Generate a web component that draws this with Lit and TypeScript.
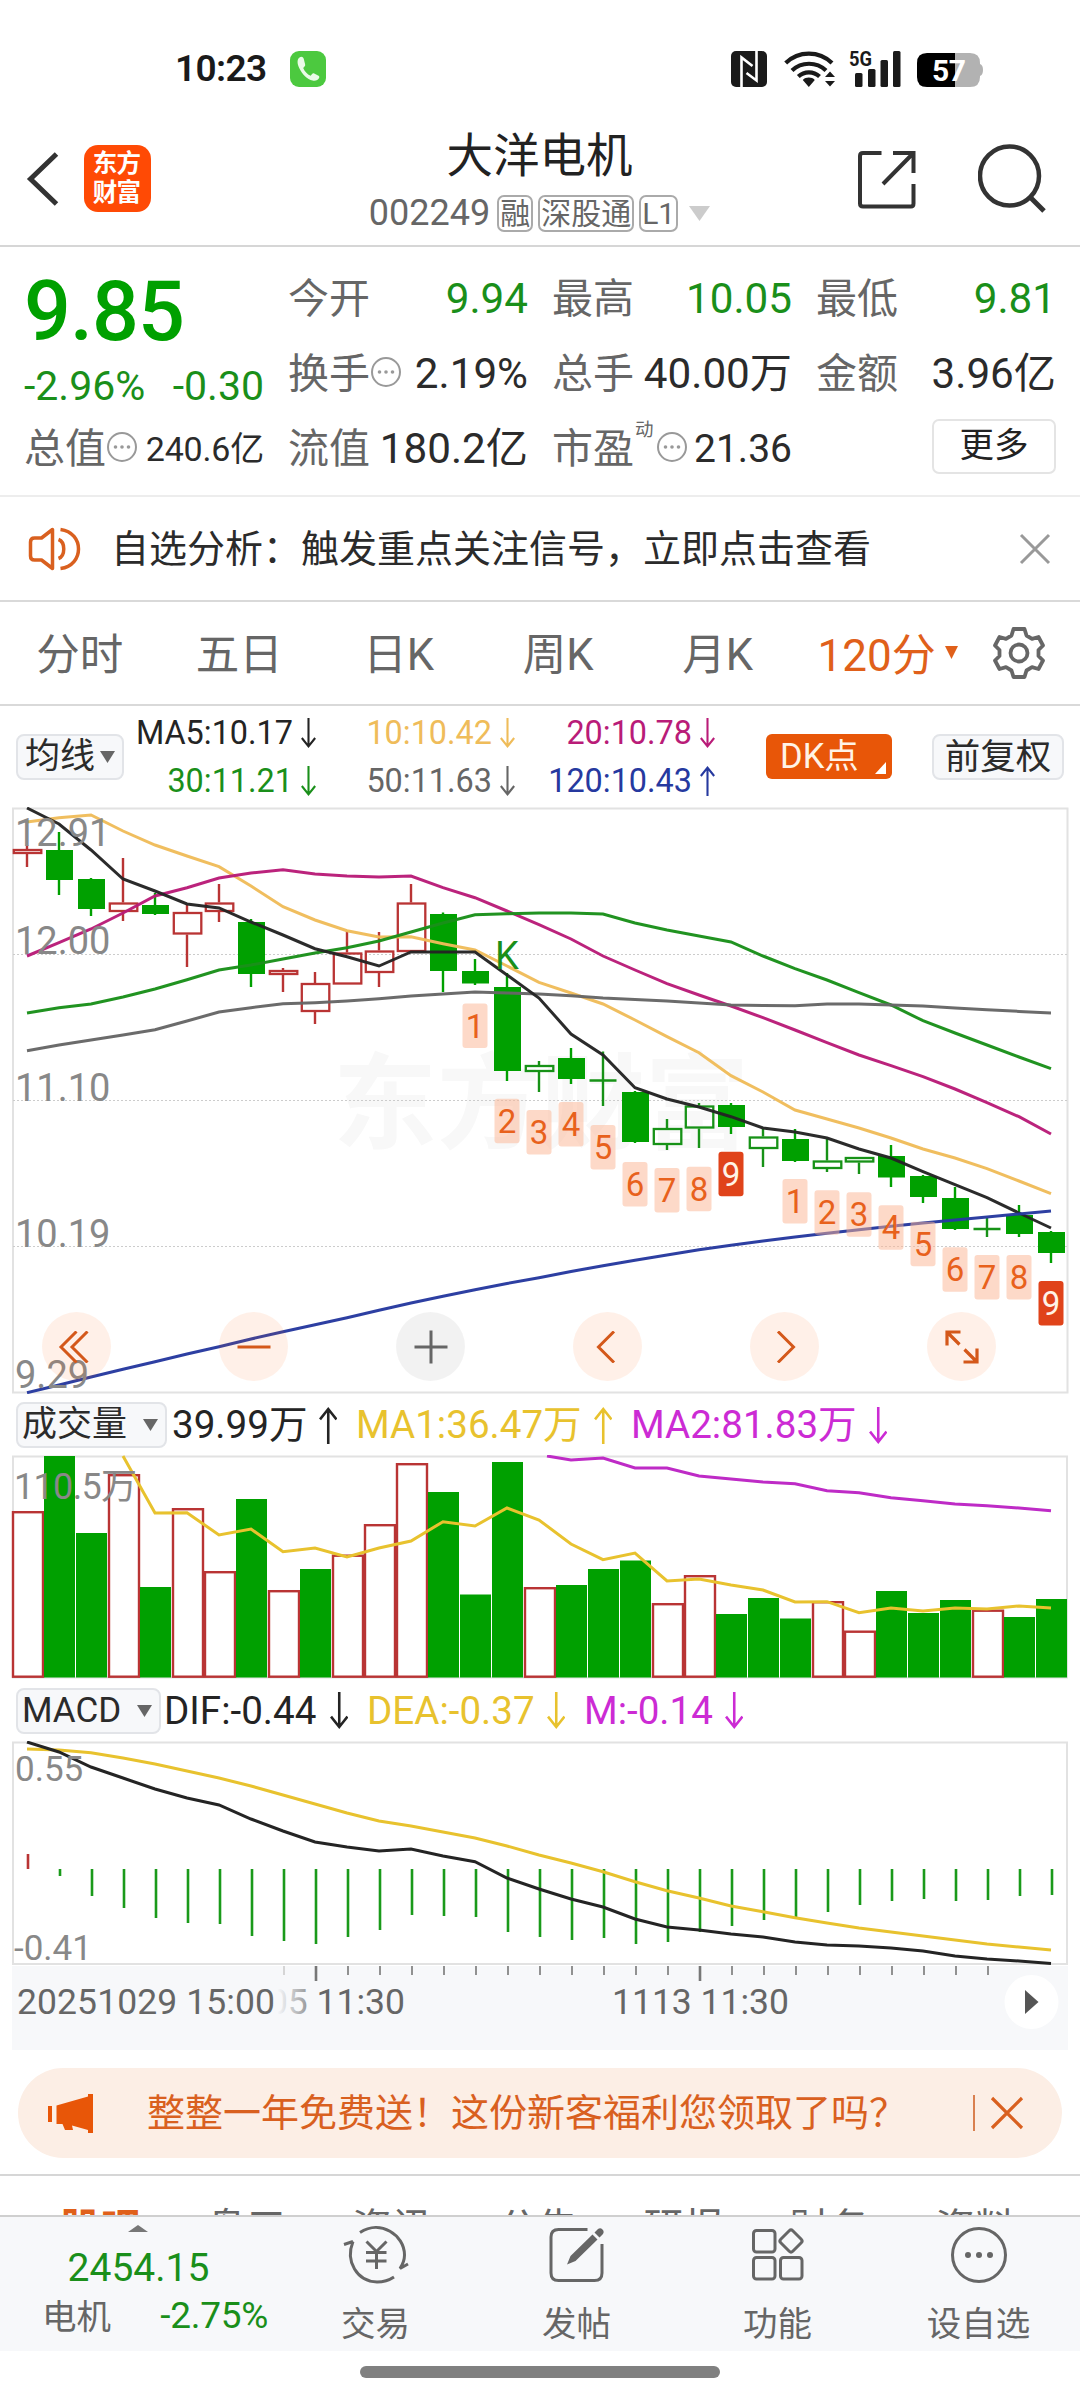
import { LitElement, html, svg, css } from "lit";
import { customElement, property } from "lit/decorators.js";
import { classMap } from "lit/directives/class-map.js";

const PITCH = 32;
const FIRST = 27;
const cx = (i: number) => FIRST + i * PITCH;
const points = (ys: number[], start = 0) => ys.map((y, i) => `${cx(start + i)},${y}`).join(" ");

type Kind = "r" | "g" | "h" | "c";
type Candle = [Kind, number, number, number, number];

// kind, body top, body bottom, wick top, wick bottom
const CANDLES: Candle[] = [
  ["r", 849, 854, 845, 867], ["g", 850, 880, 832, 895], ["g", 879, 909, 878, 916],
  ["r", 902.5, 912, 858, 921], ["g", 905, 914, 893, 915], ["r", 912, 934.5, 905, 967],
  ["r", 902.5, 912, 884, 922], ["g", 922, 974, 919, 987], ["r", 970, 975, 968, 992],
  ["r", 983, 1012, 972, 1024], ["r", 952.5, 984.5, 931, 984], ["r", 950.5, 973, 932, 987],
  ["r", 902.5, 952, 884, 951], ["g", 914, 971, 912.5, 992], ["g", 971, 983.5, 959, 985],
  ["g", 987, 1071, 973, 1081], ["h", 1065, 1072, 1061, 1092], ["g", 1058, 1079, 1048, 1084],
  ["c", 1080.5, 1080.5, 1051.5, 1106], ["g", 1092, 1142, 1091, 1143], ["h", 1128, 1145, 1119, 1150],
  ["h", 1105.5, 1128.5, 1103, 1148], ["g", 1105, 1127, 1103, 1134], ["h", 1136.5, 1149, 1129, 1167],
  ["g", 1139, 1161, 1129, 1162], ["h", 1160.5, 1169, 1139, 1172], ["h", 1157, 1162.5, 1157, 1174],
  ["g", 1156, 1177.5, 1145, 1187], ["g", 1176, 1197, 1175, 1203], ["g", 1198, 1229, 1187, 1230],
  ["c", 1229, 1229, 1218, 1237], ["g", 1215, 1234, 1205, 1237], ["g", 1232, 1253, 1231, 1263],
];

const MA_LINES: { color: string; ys: number[] }[] = [
  { color: "#EFBC5A", ys: [822, 817.7, 815, 831, 845, 856, 866.7, 886, 906.7, 920, 930.7, 937, 936.7, 943.7, 950, 966, 982.3, 993, 1004, 1020, 1036.7, 1052.7, 1075.7, 1092, 1110, 1119, 1128, 1138, 1149, 1158, 1168.7, 1181, 1193.7] },
  { color: "#B91C78", ys: [956, 942.7, 929, 913, 896, 887.7, 878, 873, 869.7, 874, 876, 877, 876, 887.7, 897.7, 911, 924.7, 939, 956, 970, 983.7, 995, 1006, 1017.7, 1030, 1042.7, 1055, 1065.7, 1076.7, 1089, 1102.7, 1116.7, 1134] },
  { color: "#1A8F1A", ys: [1013, 1007.7, 1004, 997, 989, 979.7, 970, 965, 959, 953, 947.7, 941, 932, 923, 914.7, 913.7, 913, 913, 914, 923, 930, 936, 942, 956, 968.7, 980, 992.7, 1005, 1020.7, 1033, 1045, 1057, 1068.7] },
  { color: "#666666", ys: [1050.7, 1045, 1040, 1035, 1029.7, 1021, 1012, 1007.7, 1003.7, 1002.7, 1001, 998.7, 996, 994, 992, 993, 994, 995.7, 998, 999.5, 1001, 1003, 1005, 1005.5, 1005.7, 1004, 1004, 1005, 1006, 1008, 1009.7, 1011.4, 1013] },
  { color: "#242424", ys: [808, 824, 850, 879, 891, 904, 908, 922, 935, 948.7, 956.7, 966, 952, 952, 952, 975, 998, 1034, 1055, 1087.7, 1099, 1107, 1116.7, 1128, 1132, 1138, 1149, 1158, 1171.7, 1184.7, 1197.7, 1213, 1228] },
  { color: "#26399F", ys: [1392.7, 1385, 1377, 1369.3, 1361.7, 1354, 1346.7, 1339, 1331.7, 1324.7, 1317.7, 1310.3, 1303, 1296.3, 1289.7, 1283.5, 1277.7, 1271.5, 1265.7, 1260.2, 1255, 1249.7, 1245.3, 1241, 1237, 1233.3, 1229.7, 1226.3, 1223, 1220, 1217, 1214, 1211] },
];

const BADGES: [number, string, number][] = [
  [14, "1", 1003.5], [15, "2", 1098.7], [16, "3", 1110], [17, "4", 1102], [18, "5", 1125],
  [19, "6", 1162], [20, "7", 1168], [21, "8", 1166.7], [22, "9", 1151.7], [24, "1", 1179],
  [25, "2", 1190.3], [26, "3", 1192.3], [27, "4", 1205.3], [28, "5", 1221.7], [29, "6", 1247.3],
  [30, "7", 1255], [31, "8", 1255], [32, "9", 1281],
];

const PRICE_LABELS: [string, number][] = [["12.91", 845.5], ["12.00", 953.5], ["11.10", 1100.5], ["10.19", 1246.5], ["9.29", 1388]];

const VOLUMES: ["r" | "g", number][] = [
  ["r", 1511], ["g", 1456], ["g", 1533], ["r", 1474], ["g", 1587], ["r", 1508], ["r", 1571], ["g", 1499],
  ["r", 1590], ["g", 1569], ["r", 1554.5], ["r", 1524], ["r", 1463], ["g", 1492], ["g", 1594.5], ["g", 1462],
  ["r", 1587], ["g", 1585], ["g", 1569], ["g", 1560.5], ["r", 1603], ["r", 1575], ["g", 1614], ["g", 1598],
  ["g", 1618.5], ["r", 1601], ["r", 1630.5], ["g", 1591], ["g", 1613], ["g", 1600], ["r", 1609.5], ["g", 1617], ["g", 1599],
];
const VOL_MA1 = [1456, 1513, 1512.7, 1535, 1529, 1551.7, 1548, 1557, 1548, 1541, 1521.7, 1526, 1508, 1520, 1544, 1559.7, 1553, 1581, 1579, 1585, 1590, 1602, 1601.7, 1612.7, 1608, 1611, 1608, 1609, 1606, 1608];
const VOL_MA2 = [1460, 1458, 1468, 1468, 1476, 1479, 1482, 1483.7, 1490.7, 1492.7, 1497.7, 1500.7, 1504, 1505.7, 1508, 1510.7];

const DIF = [1742, 1752, 1767, 1778, 1789, 1798, 1805, 1819, 1831, 1842, 1847, 1851, 1849, 1856, 1861.7, 1878, 1889, 1899, 1907, 1919, 1927, 1930, 1934, 1937, 1942, 1945, 1946, 1948, 1951, 1956, 1959, 1961, 1963.5];
const DEA = [1749, 1750, 1752.7, 1758, 1764, 1771, 1778, 1786, 1795, 1804, 1813, 1821, 1826, 1832, 1838, 1846, 1855, 1863, 1871.7, 1881.7, 1890.7, 1898, 1906, 1911.7, 1917.7, 1923, 1928, 1932, 1936, 1940, 1944, 1947, 1950];
const HIST = [1854, 1876, 1896, 1908, 1918, 1923, 1924, 1936, 1941, 1944, 1937, 1930, 1915, 1916, 1917, 1932, 1937, 1940, 1938, 1944, 1942, 1932, 1926, 1920, 1917, 1912, 1905, 1901, 1899, 1901, 1900, 1896, 1895];

const font = css`
  :host {
    font-family: Roboto, "Noto Sans CJK SC", sans-serif;
    box-sizing: border-box;
  }
  *, *::before, *::after { box-sizing: border-box; }
  svg { display: block; flex: none; }
`;

@customElement("status-bar")
export class StatusBar extends LitElement {
  static styles = [font, css`
    :host { display: flex; height: 100px; padding: 42px 96px 0 175px; align-items: flex-start; }
    .time { font-weight: 600; font-size: 37px; line-height: 54px; letter-spacing: -0.6px; color: #1a1a1a; width: 115px; }
    .phone { margin-top: 9px; }
    .icons { margin-left: auto; margin-top: 8px; overflow: visible; }
    .net { font: 700 21px Roboto, sans-serif; fill: #1a1a1a; }
    .battery { font: 700 30px Roboto, sans-serif; fill: #fff; }
  `];
  render() {
    return html`
      <span class="time">10:23</span>
      <svg class="phone" width="36" height="36" viewBox="0 0 36 36">
        <rect width="36" height="36" rx="9" fill="#4CC93F" />
        <path d="M9.500 6.500c-2.600 2-2.400 6-.3 10.400 3 6.300 8 11.200 13.400 12.600 2.600.6 5.600-.2 6.600-2.800.3-.8 0-1.600-.7-2l-4.300-2.300c-.8-.4-1.600-.2-2.100.5l-1.500 1.800c-3.500-1.600-6-4.300-7.400-7.800l1.500-1.600c.5-.6.6-1.300.4-2.100L13.800 8c-.6-2-2.500-2.900-4.300-1.500z" fill="#EAFBE7" />
      </svg>
      <svg class="icons" width="254" height="40" viewBox="730 50 254 40">
        <rect x="731" y="51" width="36" height="36" rx="5" fill="#1a1a1a" />
        <path d="M741.500 87V57.500l11 8.500M756.500 51v29.500l-10-7.500" fill="none" stroke="#fff" stroke-width="2.600" />
        <g fill="none" stroke="#1a1a1a" stroke-width="4.200">
          <path d="M785.700 63c13-12.500 33.300-12.500 46.300 0" />
          <path d="M792 70.500c9.500-9 24.500-9 34 0" />
          <path d="M798.300 76.500c6-5.500 15.200-5.500 21.200 0" />
        </g>
        <path d="M808.800 87l-6-7c3-3.200 9-3.200 12 0zM830 71.500l5 5.500h-10zM830 86.500l5-5.500h-10z" fill="#1a1a1a" />
        <text class="net" x="849" y="65.500" textLength="23" lengthAdjust="spacingAndGlyphs">5G</text>
        <g fill="#1a1a1a">
          <rect x="855" y="73" width="7.500" height="14" rx="1.500" />
          <rect x="868" y="69" width="7.500" height="18" rx="1.500" />
          <rect x="880.500" y="60" width="7.500" height="27" rx="1.500" />
          <rect x="893" y="51" width="7.500" height="36" rx="1.500" />
        </g>
        <path d="M955 53h15q10 0 10 10v1q3 1 3 6t-3 6v1q0 10-10 10h-15z" fill="#B2B2B2" />
        <path d="M955 53h-28q-10 0-10 10v14q0 10 10 10h28z" fill="#000" />
        <text class="battery" x="932" y="81" textLength="34">57</text>
      </svg>
    `;
  }
}

@customElement("title-bar")
export class TitleBar extends LitElement {
  static styles = [font, css`
    :host { display: grid; grid-template-columns: 222px 1fr 223px; height: 147px; border-bottom: 2px solid #d6d6d6; }
    .left { display: flex; gap: 25px; padding: 45px 0 0 26px; }
    .back { margin-top: 7px; }
    .logo { width: 67px; height: 67px; border-radius: 14px; background: #FF4A05; color: #fff; font-size: 24.500px; font-weight: 700; line-height: 28.500px; text-align: center; padding: 5px 2px 0 0; letter-spacing: -0.8px; }
    .mid { display: flex; flex-direction: column; align-items: center; }
    .name { font-size: 46.500px; line-height: 60px; margin-top: 26px; color: #222; }
    .sub { display: flex; align-items: center; height: 37px; margin-top: 9px; font-size: 35.500px; line-height: 37px; color: #666; }
    .tag { border: 2px solid #aaa; border-radius: 7px; height: 37px; line-height: 33px; margin-left: 5px; font-size: 30px; padding: 0 1px; }
    .code { font-size: 36px; }
    .code + .tag { margin-left: 7px; }
    .down { margin-left: 11px; }
    .right { display: flex; gap: 61px; padding-top: 44px; }
    .share { margin-top: 6px; }
  `];
  render() {
    return html`
      <div class="left">
        <svg class="back" width="33" height="54" viewBox="0 0 33 54"><path d="M30.500 2L4.500 27l26 25" fill="none" stroke="#333" stroke-width="5" /></svg>
        <div class="logo">东方<br />财富</div>
      </div>
      <div class="mid">
        <div class="name">大洋电机</div>
        <div class="sub">
          <span class="code">002249</span><span class="tag">融</span><span class="tag">深股通</span><span class="tag">L1</span>
          <svg class="down" width="21" height="15" viewBox="0 0 21 15"><path d="M0 0h21L10.500 15z" fill="#ccc" /></svg>
        </div>
      </div>
      <div class="right">
        <svg class="share" width="60" height="60" viewBox="857 150 60 60">
          <path d="M881.500 153H863q-3 0-3 3v47.500q0 3 3 3h48q2.500 0 2.500-3V184M893 153h20.500v20M912 154.500L883 184" fill="none" stroke="#333" stroke-width="4" />
        </svg>
        <svg width="68" height="70" viewBox="978 144 68 70">
          <circle cx="1009.500" cy="176" r="29.500" fill="none" stroke="#333" stroke-width="4.500" />
          <path d="M1030 197l14 14" stroke="#333" stroke-width="5" />
        </svg>
      </div>
    `;
  }
}

const info = html`<svg width="32" height="32" viewBox="0 0 32 32"><circle cx="16" cy="16" r="14" fill="none" stroke="#999" stroke-width="2" /><g fill="#999"><circle cx="9.500" cy="16" r="1.800" /><circle cx="16" cy="16" r="1.800" /><circle cx="22.500" cy="16" r="1.800" /></g></svg>`;

@customElement("quote-panel")
export class QuotePanel extends LitElement {
  static styles = [font, css`
    :host { display: grid; grid-template-columns: repeat(4, 240px); column-gap: 24px; grid-template-rows: repeat(3, 75px); padding: 14.500px 24px 0; height: 250px; border-bottom: 2px solid #ededed; }
    .main { grid-row: 1 / 3; display: flex; flex-direction: column; }
    .price { font-size: 82.500px; font-weight: 500; line-height: 96px; color: #00A000; margin-top: 2px; letter-spacing: -0.900px; }
    .chg { display: flex; justify-content: space-between; font-size: 41px; line-height: 50px; color: #1A8F1A; margin-top: 1px; }
    .cell { display: flex; align-items: center; justify-content: space-between; line-height: 50px; white-space: nowrap; }
    .k { display: flex; align-items: center; font-size: 41px; color: #666; }
    .k svg { margin: -5px 0 0 0; }
    .sup { font-size: 18.500px; line-height: 20px; margin: -38px 2px 0 1px; }
    .v { font-size: 42.200px; color: #2b2b2b; }
    .v.small { font-size: 34px; letter-spacing: -0.200px; }
    .v.mid { font-size: 39px; }
    .v.down { color: #1A8F1A; }
    .more { width: 124px; height: 55px; margin-left: auto; align-self: center; border: 2px solid #e4e4e4; border-radius: 7px; font-size: 34.500px; line-height: 48px; text-align: center; color: #222; margin-bottom: 5px; }
  `];
  cell(k: unknown, v: string, cls = "") {
    return html`<div class="cell"><span class="k">${k}</span><span class="v ${cls}">${v}</span></div>`;
  }
  render() {
    return html`
      <div class="main">
        <div class="price">9.85</div>
        <div class="chg"><span>-2.96%</span><span>-0.30</span></div>
      </div>
      ${this.cell("今开", "9.94", "down")} ${this.cell("最高", "10.05", "down")} ${this.cell("最低", "9.81", "down")}
      ${this.cell(html`换手${info}`, "2.19%")} ${this.cell("总手", "40.00万")} ${this.cell("金额", "3.96亿")}
      ${this.cell(html`总值${info}`, "240.6亿", "small")} ${this.cell("流值", "180.2亿")}
      ${this.cell(html`市盈<span class="sup">动</span>${info}`, "21.36", "mid")}
      <div class="more">更多</div>
    `;
  }
}

@customElement("notice-row")
export class NoticeRow extends LitElement {
  static styles = [font, css`
    :host { display: flex; align-items: center; height: 105px; border-bottom: 2px solid #d9d9d9; padding: 0 29px 0 28px; }
    .text { font-size: 38px; color: #2b2b2b; margin-left: 29px; line-height: 50px; }
    .x { margin-left: auto; }
  `];
  render() {
    return html`
      <svg width="54" height="46" viewBox="28 526 54 46" fill="none" stroke="#D9601F" stroke-width="3.500">
        <path d="M52.500 529.500v39l-11-8.500h-7q-4 0-4-4v-14q0-4 4-4h7z" stroke-linejoin="round" />
        <path d="M58.500 539.500c7 2.500 7 16.500 0 19M60.500 529.500c24 3 24 36 0 39" />
      </svg>
      <span class="text">自选分析：触发重点关注信号，立即点击查看</span>
      <svg class="x" width="32" height="32" viewBox="0 0 32 32"><path d="M2 2l28 28M30 2L2 30" stroke="#999" stroke-width="3" /></svg>
    `;
  }
}

@customElement("period-tabs")
export class PeriodTabs extends LitElement {
  static styles = [font, css`
    :host { display: flex; align-items: center; height: 104px; border-bottom: 2px solid #d9d9d9; }
    .tab { flex: 0 0 159.500px; text-align: center; font-size: 43.500px; line-height: 60px; color: #666; padding-top: 5px; }
    .on { color: #E0601A; font-size: 44px; line-height: 60px; margin-left: 20px; padding-top: 5px; }
    .tri { margin: -2px 35px 0 9px; }
  `];
  render() {
    return html`
      ${["分时", "五日", "日K", "周K", "月K"].map((t) => html`<span class="tab">${t}</span>`)}
      <span class="on">120分</span>
      <svg class="tri" width="13" height="13" viewBox="0 0 13 13"><path d="M0 0h13L6.500 13z" fill="#E0601A" /></svg>
      <svg width="52" height="52" viewBox="-26 -26 52 52" fill="none" stroke="#666" stroke-width="3.800">
        <circle r="8.500" />
        <path d="M-5.500 -24H5.500L7.500 -17.500L13 -14.200L19.500 -16L24 -7.500L19.500 -3V3L24 7.500L19.500 16L13 14.200L7.500 17.500L5.500 24H-5.500L-7.500 17.500L-13 14.200L-19.500 16L-24 7.500L-19.500 3V-3L-24 -7.500L-19.500 -16L-13 -14.200L-7.500 -17.500Z" stroke-linejoin="round" />
      </svg>
    `;
  }
}

@customElement("trend-arrow")
export class TrendArrow extends LitElement {
  @property({ type: Boolean }) up = false;
  @property({ type: Number }) size = 28;
  static styles = css`:host { display: block; flex: none; } svg { display: block; }`;
  render() {
    const d = this.up ? "M9 36V2M1 12L9 2l8 10" : "M9 0v34M1 24l8 10 8-10";
    return html`<svg width=${this.size / 2} height=${this.size} viewBox="0 0 18 36"><path d=${d} fill="none" stroke="currentColor" stroke-width="2.500" /></svg>`;
  }
}

@customElement("pick-box")
export class PickBox extends LitElement {
  static styles = [font, css`
    :host { display: flex; align-items: center; justify-content: space-between; height: 46px; background: #F7F8FA; border: 2px solid #e2e4e8; border-radius: 8px; color: #2b2b2b; line-height: 42px; font-size: 35px; white-space: nowrap; }
  `];
  render() {
    return html`<slot></slot><svg width="15" height="12" viewBox="0 0 15 12"><path d="M0 0h15L7.500 12z" fill="#666" /></svg>`;
  }
}

@customElement("average-bar")
export class AverageBar extends LitElement {
  static styles = [font, css`
    :host { display: flex; height: 101px; padding-left: 16px; align-items: center; }
    .pick { width: 108px; padding: 0 7px 0 7px; font-size: 35px; }
    .grid { display: grid; grid-template-columns: 192px 199px 200px; grid-auto-rows: 48px; padding-top: 1px; }
    .item { display: flex; align-items: center; justify-content: flex-end; gap: 8px; font-size: 32.400px; line-height: 48px; }
    .dk { display: flex; align-items: flex-end; justify-content: space-between; width: 126px; height: 45px; margin-left: 51px; padding: 0 6px 5px 14px; background: #E85608; border-radius: 6px; color: #fff3e6; font-size: 34.500px; line-height: 36px; }
    .adj { width: 132px; height: 46px; margin-left: 40px; background: #F7F8FA; border: 2px solid #e2e4e8; border-radius: 8px; font-size: 35.500px; line-height: 42px; text-align: center; color: #2b2b2b; }
  `];
  render() {
    const rows: [string, string, boolean][] = [
      ["MA5:10.17", "#242424", false], ["10:10.42", "#EFBC5A", false], ["20:10.78", "#B91C78", false],
      ["30:11.21", "#1A8F1A", false], ["50:11.63", "#666", false], ["120:10.43", "#26399F", true],
    ];
    return html`
      <pick-box class="pick">均线</pick-box>
      <div class="grid">
        ${rows.map(([t, c, up]) => html`<span class="item" style="color:${c}">${t}<trend-arrow .up=${up} .size=${30}></trend-arrow></span>`)}
      </div>
      <div class="dk"><span>DK点</span><svg width="11" height="12" viewBox="0 0 11 12"><path d="M11 0v12H0z" fill="#fff" /></svg></div>
      <div class="adj">前复权</div>
    `;
  }
}

@customElement("candle-chart")
export class CandleChart extends LitElement {
  static styles = [font, css`
    :host { display: block; position: relative; height: 587px; }
    .axis { font: 38px Roboto, sans-serif; fill: #888; }
    .mark { font: 33px Roboto, sans-serif; fill: #E8611C; text-anchor: middle; }
    .mark.hot { fill: #fff3e6; }
    .k { font: 38px Roboto, sans-serif; fill: #1A8F1A; }
    .brand { font: 700 104px "Noto Sans CJK SC", sans-serif; fill: #f8f8f8; }
    .controls { position: absolute; left: 42px; top: 505px; display: flex; gap: 108px; }
    .btn { width: 69px; height: 69px; border-radius: 50%; background: rgba(255, 106, 30, 0.1); color: #D4581A; display: flex; align-items: center; justify-content: center; }
    .btn.off { background: rgba(0, 0, 0, 0.05); color: #666; }
  `];
  candle([kind, top, bottom, high, low]: Candle, i: number) {
    const x = cx(i);
    if (kind === "g") {
      return svg`<g fill="#00A000"><rect x=${x - 1.2} y=${high} width="2.400" height=${low - high} /><rect x=${x - 13} y=${top} width="27" height=${bottom - top} /></g>`;
    }
    const color = kind === "r" ? "#B93434" : "#179217";
    if (kind === "c") {
      return svg`<path d="M${x} ${high}V${low}M${x - 13.5} ${top}H${x + 13.5}" stroke=${color} stroke-width="2.400" />`;
    }
    return svg`<path d="M${x} ${high}V${top}M${x} ${bottom}V${Math.max(low, bottom)}" stroke=${color} stroke-width="2.400" />
      <rect x=${x - 13.2} y=${top + 1} width="27.500" height=${bottom - top - 2} fill="none" stroke=${color} stroke-width="2.300" />`;
  }
  render() {
    return html`
      <svg width="1080" height="587" viewBox="0 807 1080 587">
        <text class="brand" x="333" y="1141" textLength="416">东方财富</text>
        <path d="M13 808.500H1067.500V1392.500H13z" fill="none" stroke="#e2e2e2" stroke-width="2" />
        ${[954.5, 1100.5, 1246.5].map((y) => svg`<path d="M13 ${y}H1067" stroke="#ccc" stroke-width="1" stroke-dasharray="2 2" />`)}
        ${CANDLES.map((c, i) => this.candle(c, i))}
        ${MA_LINES.map((l) => svg`<polyline points=${points(l.ys)} fill="none" stroke=${l.color} stroke-width="3" stroke-opacity="0.970" />`)}
        <text class="k" x="495" y="969">K</text>
        ${BADGES.map(([i, n, y]) => {
          const hot = n === "9";
          return svg`<rect x=${cx(i) - 12.5} y=${y} width="25" height="44.500" rx="3" fill=${hot ? "#E0431A" : "rgba(252,180,146,0.5)"} />
            <text class=${hot ? "mark hot" : "mark"} x=${cx(i)} y=${y + 34}>${n}</text>`;
        })}
        ${PRICE_LABELS.map(([t, y]) => svg`<text class="axis" x="15" y=${y}>${t}</text>`)}
      </svg>
      <div class="controls">
        <div class="btn"><svg width="38" height="32" viewBox="0 0 38 32" fill="none" stroke="currentColor" stroke-width="3"><path d="M18.500 .500L3 16l15.500 15.500M29.500 .500L14 16l15.500 15.500" /></svg></div>
        <div class="btn"><svg width="34" height="32" viewBox="0 0 34 32" fill="none" stroke="currentColor" stroke-width="3"><path d="M.500 16h33" /></svg></div>
        <div class="btn off"><svg width="34" height="34" viewBox="0 0 34 34" fill="none" stroke="currentColor" stroke-width="3"><path d="M.500 17h33M17 .500v33" /></svg></div>
        <div class="btn"><svg width="34" height="32" viewBox="0 0 34 32" fill="none" stroke="currentColor" stroke-width="3"><path d="M23 .500L7.500 16 23 31.500" /></svg></div>
        <div class="btn"><svg width="32" height="32" viewBox="0 0 32 32" fill="none" stroke="currentColor" stroke-width="3"><path d="M9 .500L24.500 16 9 31.500" /></svg></div>
        <div class="btn"><svg width="34" height="34" viewBox="0 0 34 34" fill="none" stroke="currentColor" stroke-width="3.200"><path d="M2 15.500V2h13.500M2 2l12.500 12.500M32 18.500V32H18.500M32 32L19.500 19.500" /></svg></div>
      </div>
    `;
  }
}

@customElement("indicator-head")
export class IndicatorHead extends LitElement {
  @property() name = "";
  @property({ type: Number }) boxWidth = 151;
  @property({ attribute: false }) items: [string, string, boolean, number, number][] = [];
  static styles = [font, css`
    :host { display: flex; align-items: center; padding-left: 16px; }
    .item { display: flex; align-items: center; font-size: 38.600px; line-height: 46px; justify-content: space-between; white-space: nowrap; }
    pick-box { padding: 0 7px 0 4px; flex: none; }
  `];
  render() {
    return html`
      <pick-box style="width:${this.boxWidth}px">${this.name}</pick-box>
      ${this.items.map(([t, c, up, width, gap]) => html`<span class="item" style="color:${c};width:${width}px;margin-left:${gap}px">${t}<trend-arrow .up=${up} .size=${37}></trend-arrow></span>`)}
    `;
  }
}

@customElement("volume-chart")
export class VolumeChart extends LitElement {
  static styles = [font, css`
    :host { display: block; height: 224px; }
    .axis { font: 36px Roboto, "Noto Sans CJK SC", sans-serif; fill: #888; }
  `];
  render() {
    return html`
      <svg width="1080" height="224" viewBox="0 1455 1080 224">
        <path d="M13 1456.500H1067V1677.500H13z" fill="none" stroke="#e2e2e2" stroke-width="2" />
        ${VOLUMES.map(([kind, top], i) => {
          const x = cx(i);
          return kind === "g"
            ? svg`<rect x=${x - 15} y=${top} width="31" height=${1677.5 - top} fill="#00A000" />`
            : svg`<rect x=${x - 14} y=${top + 1.2} width="30" height=${1675.5 - top} fill="#fff" stroke="#B93434" stroke-width="2.400" />`;
        })}
        <polyline points=${points(VOL_MA1, 3)} fill="none" stroke="#E8C22E" stroke-width="3" />
        <polyline points=${`547,1456 ${points(VOL_MA2, 17)}`} fill="none" stroke="#BE2BC6" stroke-width="3" />
        <text class="axis" x="14" y="1499" textLength="123">110.5万</text>
      </svg>
    `;
  }
}

@customElement("macd-chart")
export class MacdChart extends LitElement {
  static styles = [font, css`
    :host { display: block; height: 309px; }
    .axis { font: 35px Roboto, sans-serif; fill: #888; }
    .time { font: 35.500px Roboto, sans-serif; fill: #666; }
    .center { text-anchor: middle; }
  `];
  render() {
    const ticks = Array.from({ length: 23 }, (_, n) => n + 8);
    return html`
      <svg width="1080" height="309" viewBox="0 1741 1080 309">
        <defs>
          <linearGradient id="fade" x1="0" x2="1"><stop offset="0" stop-color="#F7F8FA" /><stop offset="0.750" stop-color="#F7F8FA" /><stop offset="1" stop-color="#F7F8FA" stop-opacity="0.300" /></linearGradient>
        </defs>
        <rect x="12" y="1966" width="1056" height="84" fill="#F7F8FA" />
        <path d="M13 1742.500H1067V1964H13z" fill="none" stroke="#e2e2e2" stroke-width="2" />
        ${HIST.map((y, i) => i === 0
          ? svg`<path d="M28 ${y}V1869" stroke="#B93434" stroke-width="2.600" />`
          : svg`<path d="M${cx(i) + 1} 1869V${y}" stroke="#1A9A1A" stroke-width="2.600" />`)}
        <polyline points=${points(DEA)} fill="none" stroke="#E8C22E" stroke-width="3" />
        <polyline points=${points(DIF)} fill="none" stroke="#242424" stroke-width="3" />
        <text class="axis" x="15" y="1780.500">0.55</text>
        <text class="axis" x="14" y="1960">-0.41</text>
        ${ticks.map((i) => {
          const major = i === 9 || i === 21;
          return svg`<path d="M${cx(i) + 1} 1966V${major ? 1981 : 1975}" stroke=${i === 8 ? "#ccc" : "#777"} stroke-width=${major ? 2.6 : 1.6} />`;
        })}
        <text class="time center" x="316.500" y="2014">1105 11:30</text>
        <rect x="180" y="1984" width="130" height="40" fill="url(#fade)" />
        <text class="time center" x="700.500" y="2014">1113 11:30</text>
        <text class="time" x="17" y="2014" textLength="258">20251029 15:00</text>
        <circle cx="1031.500" cy="2002" r="27" fill="#fff" />
        <path d="M1025 1990l13.500 12L1025 2014z" fill="#555" />
      </svg>
    `;
  }
}

@customElement("promo-banner")
export class PromoBanner extends LitElement {
  static styles = [font, css`
    :host { display: flex; align-items: center; height: 90px; margin: 18px 18px 16px; border-radius: 45px; background: #FCEEE5; padding: 0 38px 0 29px; }
    .text { font-size: 38px; line-height: 50px; color: #D9601F; margin-left: 53px; }
    .bar { width: 2px; height: 36px; background: #D98050; margin-left: auto; margin-right: 15px; }
  `];
  render() {
    return html`
      <svg width="47" height="40" viewBox="47 2092 47 40" fill="#E85608">
        <path d="M48 2105h4v16h-4zM56.500 2104.500L88 2095.500V2093h5v39h-5v-3l-16-4.500 1 4.500h-8l-2.500-6h-6z" />
      </svg>
      <span class="text">整整一年免费送！这份新客福利您领取了吗？</span>
      <span class="bar"></span>
      <svg width="34" height="34" viewBox="0 0 34 34"><path d="M2 2l30 30M32 2L2 32" stroke="#D9601F" stroke-width="3.200" /></svg>
    `;
  }
}

@customElement("section-tabs")
export class SectionTabs extends LitElement {
  static styles = [font, css`
    :host { display: flex; height: 41px; border-top: 2px solid #d6d6d6; overflow: hidden; padding: 28px 0 0 27.500px; }
    .tab { flex: 0 0 145.800px; text-align: center; font-size: 40px; line-height: 50px; color: #666; }
    .on { color: #E0601A; font-weight: 700; }
  `];
  render() {
    return html`${["股吧", "盘口", "资讯", "公告", "研报", "财务", "资料"].map(
      (t, i) => html`<span class=${classMap({ tab: true, on: i === 0 })}>${t}</span>`,
    )}`;
  }
}

@customElement("bottom-nav")
export class BottomNav extends LitElement {
  static styles = [font, css`
    :host { display: flex; height: 136px; background: #F7F8FA; border-top: 2px solid #cfcfcf; color: #666; }
    .index { width: 275px; display: flex; flex-direction: column; align-items: center; color: #1A8F1A; }
    .up { margin-top: 8px; }
    .num { font-size: 39px; line-height: 44px; margin-top: 14px; padding-left: 2px; }
    .row { display: flex; justify-content: space-between; align-self: flex-start; width: 226px; line-height: 44px; margin: 4px 0 0 42px; }
    .label { color: #666; font-size: 34.500px; padding-top: 1px; }
    .pct { font-size: 37px; letter-spacing: -0.300px; }
    .item { flex: none; width: 201px; display: flex; flex-direction: column; align-items: center; font-size: 34.500px; line-height: 44px; }
    .item svg { margin-top: 6px; margin-bottom: 17px; fill: none; stroke: #666; stroke-width: 3; }
  `];
  render() {
    return html`
      <div class="index">
        <svg class="up" width="20" height="7" viewBox="0 0 20 7"><path d="M10 0l10 7H0z" fill="#777" /></svg>
        <div class="num">2454.15</div>
        <div class="row"><span class="label">电机</span><span class="pct">-2.75%</span></div>
      </div>
      <div class="item">
        <svg width="66" height="62" viewBox="342.500 2224 66 62">
          <path d="M359.500 2233.500C380 2220 404 2236 404 2256c0 5-1.500 9-4.500 13.500l8-4.500M352.500 2242.500c-8 20 4 40 24 40.500 7 0 12.500-2 17-5M343.500 2245.500l9-3" />
          <path d="M366 2242.500l10 10 10-10M376 2252v18M365.500 2253.500h20.500M365.500 2262h20.500" />
        </svg>交易
      </div>
      <div class="item">
        <svg width="58" height="62" viewBox="548.500 2224 58 62">
          <path d="M588 2230.500h-29q-7.500 0-7.500 7.500v36q0 7.500 7.500 7.500h36q7.500 0 7.500-7.500v-29" />
          <path d="M567.500 2265.500l3.500-8.500 22-21.500 5 5-22 21.500zM595 2233.500l3.500-3.500q2.500-1.500 4.500.5t.5 4.500l-3.500 3.500z" fill="#666" stroke="none" />
        </svg>发帖
      </div>
      <div class="item">
        <svg width="56" height="62" viewBox="750.500 2224 56 62">
          <rect x="754" y="2231.500" width="21.500" height="21.500" rx="3" /><rect x="754" y="2258.500" width="21.500" height="21.500" rx="3" /><rect x="781" y="2258.500" width="21.500" height="21.500" rx="3" />
          <rect x="-8.500" y="-8.500" width="17" height="17" rx="2.500" transform="translate(791.500 2242) rotate(45)" />
        </svg>功能
      </div>
      <div class="item">
        <svg width="58" height="62" viewBox="-29 -32 58 62"><circle r="26.500" cy="0" /><g fill="#666" stroke="none"><circle cx="-11" r="3" /><circle r="3" /><circle cx="11" r="3" /></g></svg>设自选
      </div>
    `;
  }
}

@customElement("app-root")
export class AppRoot extends LitElement {
  static styles = [font, css`
    :host { display: flex; flex-direction: column; width: 1080px; height: 2400px; background: #fff; overflow: hidden; }
    :host > * { flex: none; }
    .vol { height: 61px; padding-top: 1px; }
    .macd { height: 62px; padding-top: 1px; }
    .home { height: 48px; display: flex; justify-content: center; padding-top: 15px; }
    .pill { width: 360px; height: 12px; border-radius: 6px; background: #808080; }
  `];
  render() {
    return html`
      <status-bar></status-bar>
      <title-bar></title-bar>
      <quote-panel></quote-panel>
      <notice-row></notice-row>
      <period-tabs></period-tabs>
      <average-bar></average-bar>
      <candle-chart></candle-chart>
      <indicator-head class="vol" .name=${"成交量"} .boxWidth=${151} .items=${[
        ["39.99万", "#242424", true, 165, 5], ["MA1:36.47万", "#E8C22E", true, 256, 19], ["MA2:81.83万", "#CC2BD4", false, 256, 19],
      ]}></indicator-head>
      <volume-chart></volume-chart>
      <indicator-head class="macd" .name=${"MACD"} .boxWidth=${145} .items=${[
        ["DIF:-0.44", "#242424", false, 184, 3], ["DEA:-0.37", "#E8C22E", false, 198, 19], ["M:-0.14", "#CC2BD4", false, 159, 19],
      ]}></indicator-head>
      <macd-chart></macd-chart>
      <promo-banner></promo-banner>
      <section-tabs></section-tabs>
      <bottom-nav></bottom-nav>
      <div class="home"><div class="pill"></div></div>
    `;
  }
}
